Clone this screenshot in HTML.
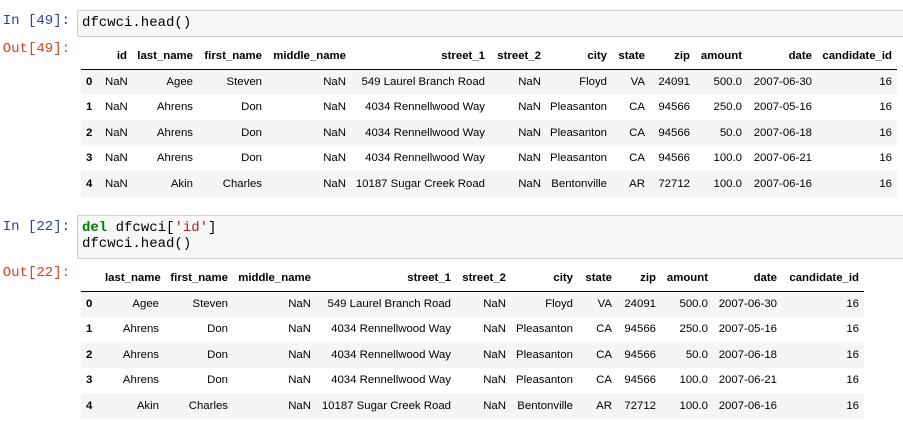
<!DOCTYPE html>
<html><head><style>
*{margin:0;padding:0;box-sizing:border-box}
body{width:903px;height:421px;background:#fff;position:relative;overflow:hidden;font-family:"Liberation Sans",Arial,sans-serif}
.p{position:absolute;font-family:"Liberation Mono",monospace;font-size:14px;text-align:right;width:70px;left:0}
.in{color:#303f9f}.out{color:#d84315}
.box{position:absolute;left:77px;width:840px;background:#f7f7f7;border:1px solid #cfcfcf;border-radius:2px;font-family:"Liberation Mono",monospace;font-size:14px;line-height:16px;padding:4px 0 0 4px;color:#000}
table{position:absolute;left:81px;border-collapse:collapse;table-layout:fixed;font-size:11.4px;color:#000}
td,th{text-align:right;padding:0 5px 0 0;height:25.5px;white-space:nowrap;overflow:visible}
th{font-weight:bold}
thead th{border-bottom:1px solid #000;height:25px}
tbody tr:nth-child(odd){background:#f5f5f5}
tbody th{text-align:left;padding-left:5px}
.k{color:#008000;font-weight:bold}.s{color:#ba2121}
</style></head><body>
<div class="p in" style="top:13px">In [49]:</div>
<div class="box" style="top:10px;height:27px">dfcwci.head()</div>
<div class="p out" style="top:41px">Out[49]:</div>
<table style="top:44px;width:816px">
<colgroup><col style="width:24px"><col style="width:27px"><col style="width:66px"><col style="width:69px"><col style="width:84px"><col style="width:139px"><col style="width:56px"><col style="width:66px"><col style="width:38px"><col style="width:45px"><col style="width:52px"><col style="width:70px"><col style="width:80px"></colgroup>
<thead><tr><th></th><th>id</th><th>last_name</th><th>first_name</th><th>middle_name</th><th>street_1</th><th>street_2</th><th>city</th><th>state</th><th>zip</th><th>amount</th><th>date</th><th>candidate_id</th></tr></thead>
<tbody>
<tr><th>0</th><td>NaN</td><td>Agee</td><td>Steven</td><td>NaN</td><td>549 Laurel Branch Road</td><td>NaN</td><td>Floyd</td><td>VA</td><td>24091</td><td>500.0</td><td>2007-06-30</td><td>16</td></tr>
<tr><th>1</th><td>NaN</td><td>Ahrens</td><td>Don</td><td>NaN</td><td>4034 Rennellwood Way</td><td>NaN</td><td>Pleasanton</td><td>CA</td><td>94566</td><td>250.0</td><td>2007-05-16</td><td>16</td></tr>
<tr><th>2</th><td>NaN</td><td>Ahrens</td><td>Don</td><td>NaN</td><td>4034 Rennellwood Way</td><td>NaN</td><td>Pleasanton</td><td>CA</td><td>94566</td><td>50.0</td><td>2007-06-18</td><td>16</td></tr>
<tr><th>3</th><td>NaN</td><td>Ahrens</td><td>Don</td><td>NaN</td><td>4034 Rennellwood Way</td><td>NaN</td><td>Pleasanton</td><td>CA</td><td>94566</td><td>100.0</td><td>2007-06-21</td><td>16</td></tr>
<tr><th>4</th><td>NaN</td><td>Akin</td><td>Charles</td><td>NaN</td><td>10187 Sugar Creek Road</td><td>NaN</td><td>Bentonville</td><td>AR</td><td>72712</td><td>100.0</td><td>2007-06-16</td><td>16</td></tr>
</tbody></table>
<div class="p in" style="top:219px">In [22]:</div>
<div class="box" style="top:215px;height:44px">
<span class="k">del</span> dfcwci[<span class="s">'id'</span>]<br>dfcwci.head()</div>
<div class="p out" style="top:265px">Out[22]:</div>
<table style="top:266px;width:783px">
<colgroup><col style="width:24px"><col style="width:59px"><col style="width:69px"><col style="width:83px"><col style="width:140px"><col style="width:55px"><col style="width:67px"><col style="width:39px"><col style="width:44px"><col style="width:52px"><col style="width:69px"><col style="width:82px"></colgroup>
<thead><tr><th></th><th>last_name</th><th>first_name</th><th>middle_name</th><th>street_1</th><th>street_2</th><th>city</th><th>state</th><th>zip</th><th>amount</th><th>date</th><th>candidate_id</th></tr></thead>
<tbody>
<tr><th>0</th><td>Agee</td><td>Steven</td><td>NaN</td><td>549 Laurel Branch Road</td><td>NaN</td><td>Floyd</td><td>VA</td><td>24091</td><td>500.0</td><td>2007-06-30</td><td>16</td></tr>
<tr><th>1</th><td>Ahrens</td><td>Don</td><td>NaN</td><td>4034 Rennellwood Way</td><td>NaN</td><td>Pleasanton</td><td>CA</td><td>94566</td><td>250.0</td><td>2007-05-16</td><td>16</td></tr>
<tr><th>2</th><td>Ahrens</td><td>Don</td><td>NaN</td><td>4034 Rennellwood Way</td><td>NaN</td><td>Pleasanton</td><td>CA</td><td>94566</td><td>50.0</td><td>2007-06-18</td><td>16</td></tr>
<tr><th>3</th><td>Ahrens</td><td>Don</td><td>NaN</td><td>4034 Rennellwood Way</td><td>NaN</td><td>Pleasanton</td><td>CA</td><td>94566</td><td>100.0</td><td>2007-06-21</td><td>16</td></tr>
<tr><th>4</th><td>Akin</td><td>Charles</td><td>NaN</td><td>10187 Sugar Creek Road</td><td>NaN</td><td>Bentonville</td><td>AR</td><td>72712</td><td>100.0</td><td>2007-06-16</td><td>16</td></tr>
</tbody></table>
</body></html>
